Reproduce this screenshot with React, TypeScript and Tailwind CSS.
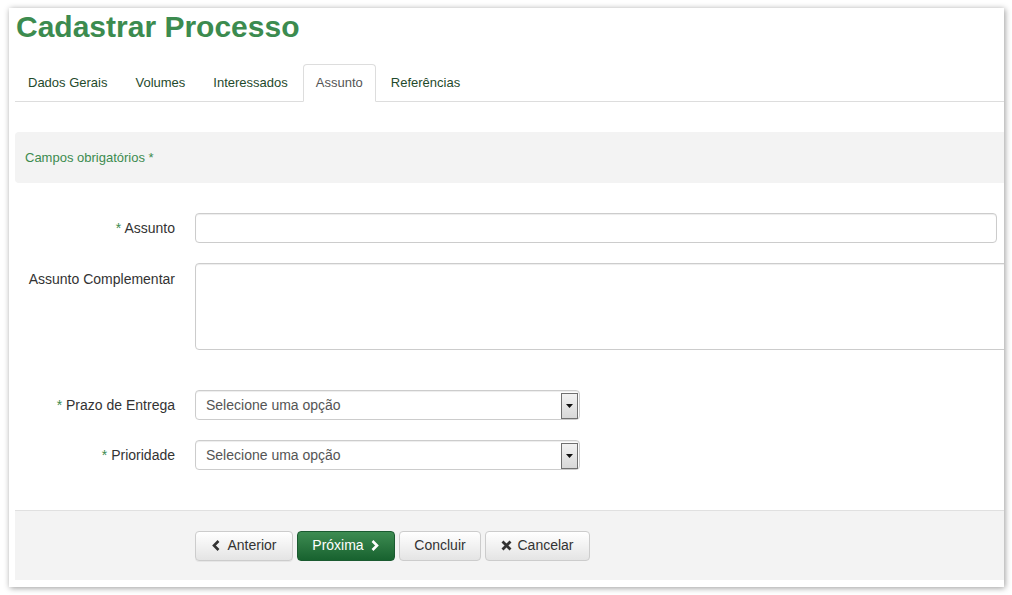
import React from "react";

type Tab = { label: string; active?: boolean };

const tabs: Tab[] = [
  { label: "Dados Gerais" },
  { label: "Volumes" },
  { label: "Interessados" },
  { label: "Assunto", active: true },
  { label: "Referências" },
];

const ChevronLeft = () => (
  <svg width="10" height="11" viewBox="0 0 10 11" className="mr-[6px]">
    <path d="M7.5 1 L3 5.5 L7.5 10" fill="none" stroke="#333" strokeWidth="2.6" />
  </svg>
);

const ChevronRight = () => (
  <svg width="10" height="11" viewBox="0 0 10 11" className="ml-[6px]">
    <path d="M2.5 1 L7 5.5 L2.5 10" fill="none" stroke="#fff" strokeWidth="2.6" />
  </svg>
);

const Times = () => (
  <svg width="11" height="11" viewBox="0 0 11 11" className="mr-[5px]">
    <path d="M1.5 1.5 L9.5 9.5 M9.5 1.5 L1.5 9.5" fill="none" stroke="#333" strokeWidth="2.8" />
  </svg>
);

const FakeSelect = () => (
  <div className="relative shrink-0 w-[385px] h-[30px] border border-[#ccc] rounded-[4px] bg-white flex items-center pl-[10px] shadow-[inset_0_1px_1px_rgba(0,0,0,0.075)]">
    <span className="text-[14px] text-[#555]">Selecione uma opção</span>
    <div className="absolute right-[1px] top-[2px] w-[17px] h-[26px] border border-[#707070] bg-gradient-to-b from-[#f2f2f2] to-[#d8d8d8] flex items-center justify-center">
      <svg width="7" height="4" viewBox="0 0 7 4">
        <path d="M0 0 H7 L3.5 4 Z" fill="#111" />
      </svg>
    </div>
  </div>
);

const Label: React.FC<{ text: string; required?: boolean; top?: boolean }> = ({
  text,
  required,
  top,
}) => (
  <div
    className={`w-[160px] shrink-0 whitespace-nowrap text-right text-[14px] text-[#333] ${
      top ? "pt-[6px]" : "h-[30px] leading-[30px]"
    }`}
  >
    {required && <span className="text-[#3c8b4f]">* </span>}
    {text}
  </div>
);

export default function App() {
  return (
    <div
      className="w-[1012px] h-[595px] bg-white pt-[8px] pl-[9px]"
      style={{ fontFamily: '"Liberation Sans", Arial, sans-serif' }}
    >
      <div className="w-[995px] h-[579px] bg-white overflow-hidden pl-[6px] shadow-[1px_1px_6px_rgba(0,0,0,0.4)]">
        {/* Title */}
        <h1 className="pt-[1px] pl-[1px] text-[30px] leading-[36px] font-bold text-[#3c8b4f]">
          Cadastrar Processo
        </h1>

        {/* Tabs */}
        <ul className="mt-[19px] flex border-b border-[#ddd]">
          {tabs.map((t) => (
            <li key={t.label} className="-mb-px mr-[2px]">
              <div
                className={`h-[38px] px-[12px] flex items-center text-[13px] border rounded-t-[4px] ${
                  t.active
                    ? "border-[#ddd] border-b-white bg-white text-[#555]"
                    : "border-transparent text-[#1f4a2c]"
                }`}
              >
                {t.label}
              </div>
            </li>
          ))}
        </ul>

        {/* Required fields bar */}
        <div className="mt-[30px] h-[51px] w-[1000px] bg-[#f3f3f3] rounded-l-[4px] flex items-center pl-[10px] text-[13px] text-[#3c8b4f]">
          Campos obrigatórios *
        </div>

        {/* Form */}
        <div className="pt-[30px] flex flex-col">
          <div className="flex gap-[20px]">
            <Label text="Assunto" required />
            <div className="shrink-0 w-[802px] h-[30px] border border-[#ccc] rounded-[4px] bg-white shadow-[inset_0_1px_1px_rgba(0,0,0,0.075)]" />
          </div>

          <div className="flex gap-[20px] mt-[20px]">
            <Label text="Assunto Complementar" top />
            <div className="shrink-0 w-[840px] h-[87px] border border-[#ccc] rounded-[4px] bg-white shadow-[inset_0_1px_1px_rgba(0,0,0,0.075)]" />
          </div>

          <div className="flex gap-[20px] mt-[40px]">
            <Label text="Prazo de Entrega" required />
            <FakeSelect />
          </div>

          <div className="flex gap-[20px] mt-[20px]">
            <Label text="Prioridade" required />
            <FakeSelect />
          </div>
        </div>

        {/* Footer actions */}
        <div className="mt-[40px] h-[70px] bg-[#f3f3f3] border-t border-[#e0e0e0] flex items-center gap-[4px] pl-[180px]">
          <button className="h-[30px] w-[98px] flex items-center justify-center rounded-[4px] border border-[#ccc] bg-gradient-to-b from-white to-[#e4e4e4] text-[14px] text-[#333] shadow-[0_1px_0_rgba(0,0,0,0.05)]">
            <ChevronLeft />
            Anterior
          </button>
          <button className="h-[30px] w-[98px] flex items-center justify-center rounded-[4px] border border-[#1a5a30] bg-gradient-to-b from-[#3d8c52] to-[#17622f] text-[14px] text-white">
            Próxima
            <ChevronRight />
          </button>
          <button className="h-[30px] w-[82px] flex items-center justify-center rounded-[4px] border border-[#ccc] bg-gradient-to-b from-white to-[#e4e4e4] text-[14px] text-[#333]">
            Concluir
          </button>
          <button className="h-[30px] w-[105px] flex items-center justify-center rounded-[4px] border border-[#ccc] bg-gradient-to-b from-white to-[#e4e4e4] text-[14px] text-[#333]">
            <Times />
            Cancelar
          </button>
        </div>
      </div>
    </div>
  );
}
